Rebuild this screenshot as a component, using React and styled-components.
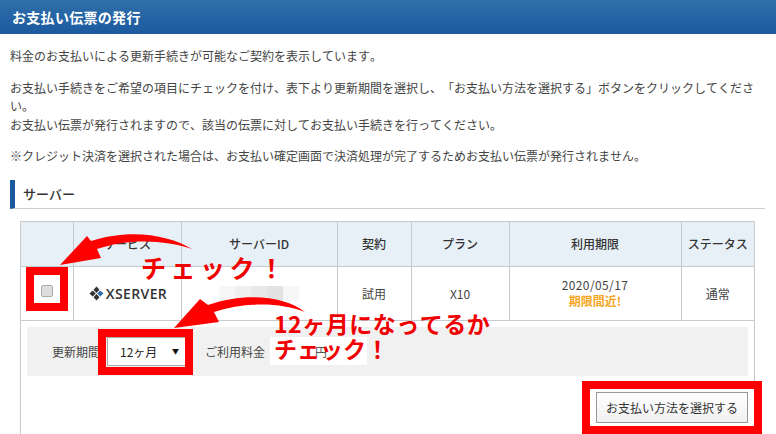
import React from "react";
import styled, { createGlobalStyle } from "styled-components";

const Global = createGlobalStyle`
  html, body { margin: 0; padding: 0; background: #fff; }
  body { width: 776px; height: 434px; overflow: hidden; font-family: "Noto Sans CJK JP", "Liberation Sans", sans-serif; color: #3c3c3c; font-size: 12px; font-kerning: none; text-spacing-trim: space-all; }
`;
const Page = styled.div`
  position: relative; width: 776px; height: 434px; overflow: hidden;
  display: flex; flex-direction: column;
`;
const Header = styled.h1`
  margin: 0; height: 34px; display: flex; align-items: center; padding-left: 12px;
  background: linear-gradient(#306fa9, #1b5a9f);
  color: #fff; font-size: 14px; letter-spacing: 0.3px; font-weight: 700; line-height: 1;
`;
const Content = styled.div`
  padding: 13px 11px 0 10px; flex: 1; display: flex; flex-direction: column; min-height: 0;
`;
const Para = styled.p`
  margin: 0 0 13px; font-size: 12px; line-height: 18.5px; color: #444;
`;
const SectionTitle = styled.h2`
  margin: 1px 0 12px; height: 28px; box-sizing: content-box; border-bottom: 1px solid #ccc;
  border-left: 5px solid #1c5a9f; padding-left: 8px;
  display: flex; align-items: center; font-size: 13px; font-weight: 500; color: #333;
`;
const TableFrame = styled.div`
  margin-left: 10px; width: 733px; flex: 1; border-left: 1px solid #c6cbd0; border-right: 1px solid #c6cbd0;
`;
const Table = styled.table`
  width: 733px; table-layout: fixed; border-collapse: collapse; border-top: 1px solid #c6cbd0;
`;
const Th = styled.th`
  height: 44px; padding: 0; background: #e8f0f7; font-size: 12px; font-weight: 500; color: #333;
  border-left: 1px solid #c6cbd0; border-bottom: 1px solid #c6cbd0; text-align: center;
  &:first-child { border-left: 0; }
`;
const Td = styled.td`
  height: 53px; padding: 0; font-size: 12px; color: #444; text-align: center;
  border-left: 1px solid #c6cbd0; border-bottom: 1px solid #c6cbd0;
  &:first-child { border-left: 0; }
`;
const CheckBox = styled.span`
  display: block; width: 10px; height: 10px; margin: -4px auto 0; border: 1px solid #aaa; border-radius: 2px;
  background: #dcdcdc; box-shadow: inset 0 0 1px #fff;
`;
const Logo = styled.span`
  display: inline-flex; align-items: center; gap: 2px; vertical-align: middle; margin-left: 2px;
`;
const LogoText = styled.span`
  font-family: "Open Sans", "Liberation Sans", sans-serif; font-size: 14px; font-weight: 600; color: #333; letter-spacing: 0.4px;
`;
const BlurId = styled.div`
  width: 80px; height: 15px; margin: 0 auto;
  background: linear-gradient(90deg, #f6f6f6 0 16px, #efefef 16px 32px, #e8e8e8 32px 48px, #e2e2e2 48px 64px, #f7f7f7 64px);
`;
const DateText = styled.div`line-height: 16px; letter-spacing: 0.4px;`;
const Warning = styled.div`line-height: 16px; font-weight: 700; color: #f5a623;`;
const Panel = styled.div`
  margin: 6px 6px 0; height: 49px; background: #f1f1f1; display: flex; align-items: center; padding-left: 25px;
`;
const PanelLabel = styled.span`color: #444; font-size: 12px;`;
const Select = styled.div`
  margin-left: 7px; width: 79px; height: 29px; box-sizing: border-box; background: #fff; border: 1px solid #aaa;
  display: flex; align-items: center; justify-content: space-between; padding: 0 6px 0 12px; font-size: 12px; color: #222;
`;
const Caret = styled.span`font-size: 7px; color: #111;`;
const FeeLabel = styled(PanelLabel)`margin-left: 19px;`;
const FeeBox = styled.div`
  margin-left: 5px; width: 97px; height: 28px; background: #fff; display: flex; align-items: center; justify-content: flex-end;
  padding-right: 40px; box-sizing: border-box; color: #555;
`;
const PayButton = styled.button`
  position: absolute; left: 596px; top: 392px; width: 152px; height: 31px; box-sizing: border-box;
  border: 1px solid #999; background: linear-gradient(#fff, #f1f1f1); font: 12px "Noto Sans CJK JP", sans-serif; color: #333; padding: 0;
`;
const RedBox = styled.div`
  position: absolute; box-sizing: border-box; border: 8px solid #fe0000; pointer-events: none;
  left: ${p => p.$x}px; top: ${p => p.$y}px; width: ${p => p.$w}px; height: ${p => p.$h}px;
`;
const Arrows = styled.svg`position: absolute; left: 0; top: 0; pointer-events: none;`;
const Note = styled.div`
  position: absolute; left: ${p => p.$x}px; top: ${p => p.$y}px; color: #f00000; font-weight: 700; white-space: nowrap;
  font-size: ${p => p.$size}px; letter-spacing: ${p => p.$ls}px; line-height: 1;
`;

const cols = [52, 108, 156, 74, 98, 172, 73];
const heads = ["", "サービス", "サーバーID", "契約", "プラン", "利用期限", "ステータス"];

export default function App() {
  return (
    <Page>
      <Global />
      <Header>お支払い伝票の発行</Header>
      <Content>
        <Para>料金のお支払いによる更新手続きが可能なご契約を表示しています。</Para>
        <Para>
          お支払い手続きをご希望の項目にチェックを付け、表下より更新期間を選択し、「お支払い方法を選択する」ボタンをクリックしてください。<br />
          お支払い伝票が発行されますので、該当の伝票に対してお支払い手続きを行ってください。
        </Para>
        <Para>※クレジット決済を選択された場合は、お支払い確定画面で決済処理が完了するためお支払い伝票が発行されません。</Para>
        <SectionTitle>サーバー</SectionTitle>
        <TableFrame>
          <Table>
            <colgroup>{cols.map((w, i) => <col key={i} style={{ width: w }} />)}</colgroup>
            <thead><tr>{heads.map((h, i) => <Th key={i}>{h}</Th>)}</tr></thead>
            <tbody>
              <tr>
                <Td><CheckBox /></Td>
                <Td>
                  <Logo>
                    <svg width="15" height="15" viewBox="0 0 15 15">
                      <path d="M7.5 0.5 10.5 3.8 7.5 7 4.5 3.8Z" fill="#333" />
                      <path d="M3.7 4.4 6.8 7.5 3.7 10.6 0.5 7.5Z" fill="#333" />
                      <path d="M11.3 4.4 14.5 7.5 11.3 10.6 8.2 7.5Z" fill="#2e6da8" />
                      <path d="M7.5 8 10.5 11.2 7.5 14.5 4.5 11.2Z" fill="#333" />
                    </svg>
                    <LogoText>XSERVER</LogoText>
                  </Logo>
                </Td>
                <Td><BlurId /></Td>
                <Td>試用</Td>
                <Td>X10</Td>
                <Td><DateText>2020/05/17</DateText><Warning>期限間近!</Warning></Td>
                <Td>通常</Td>
              </tr>
            </tbody>
          </Table>
          <Panel>
            <PanelLabel>更新期間</PanelLabel>
            <Select>12ヶ月<Caret>▼</Caret></Select>
            <FeeLabel>ご利用料金</FeeLabel>
            <FeeBox>円</FeeBox>
          </Panel>
        </TableFrame>
      </Content>
      <PayButton>お支払い方法を選択する</PayButton>
      <RedBox $x={26} $y={267} $w={42} $h={44} />
      <RedBox $x={98} $y={329} $w={95} $h={46} />
      <RedBox $x={582} $y={381} $w={180} $h={53} />
      <Arrows width="776" height="434" viewBox="0 0 776 434">
        <path d="M192 249C170 235 130 228 91 241L87 236 60 265 101 258 97 249C130 238 165 240 192 249Z" fill="#fe0000" />
        <path d="M305 312C285 296 245 292 208 305L200 299 174 328 219 322 214 312C245 302 280 302 305 312Z" fill="#fe0000" />
      </Arrows>
      <Note $x={141} $y={255} $size={25} $ls={4.5}>チェック！</Note>
      <Note $x={274} $y={312} $size={23} $ls={0.5}>12ヶ月になってるか</Note>
      <Note $x={274} $y={337} $size={23} $ls={0}>チェック！</Note>
    </Page>
  );
}
